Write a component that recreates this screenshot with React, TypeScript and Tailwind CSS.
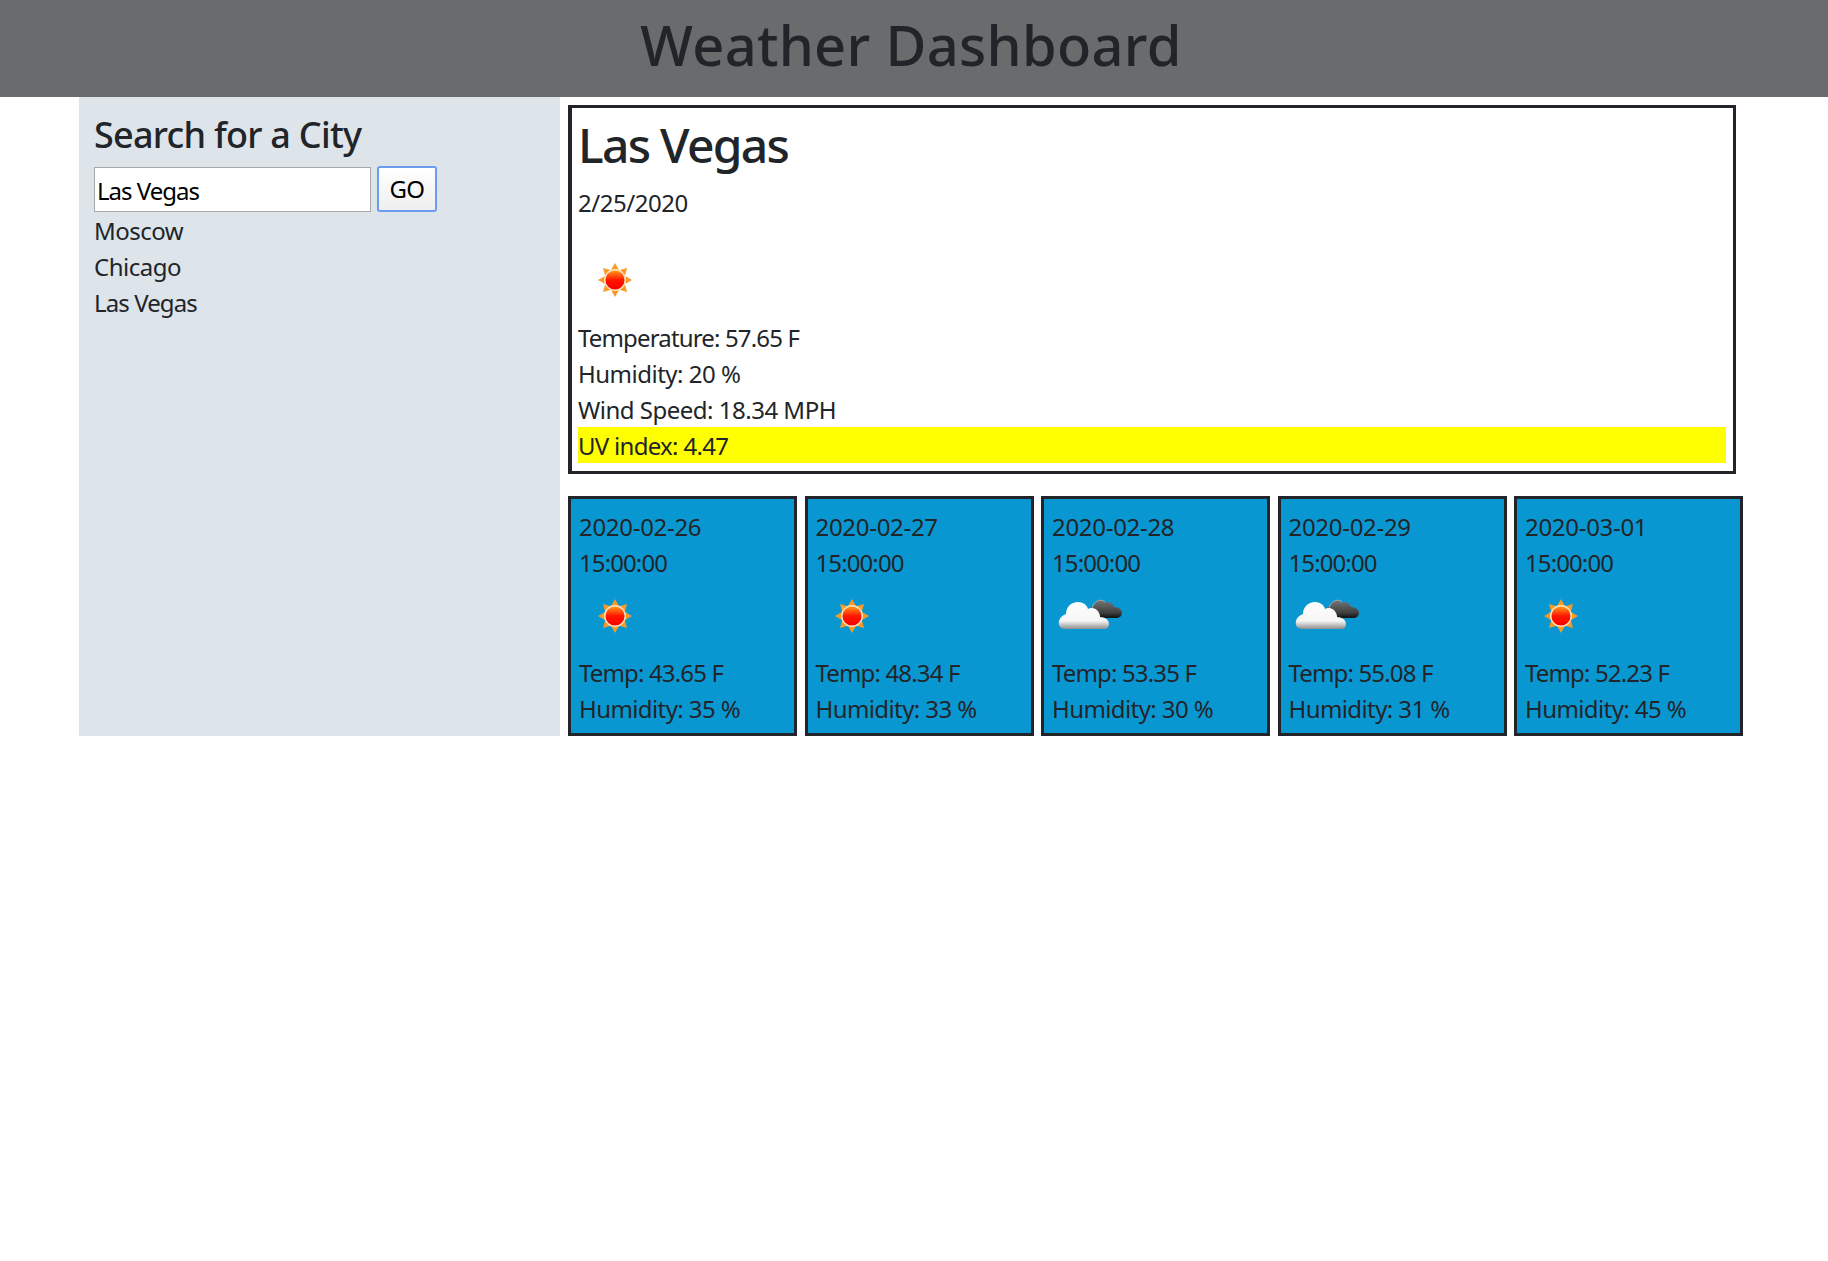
const forecast = [
  { date: "2020-02-26", icon: "sun", temp: "43.65", humidity: "35" },
  { date: "2020-02-27", icon: "sun", temp: "48.34", humidity: "33" },
  { date: "2020-02-28", icon: "cloud", temp: "53.35", humidity: "30" },
  { date: "2020-02-29", icon: "cloud", temp: "55.08", humidity: "31" },
  { date: "2020-03-01", icon: "sun", temp: "52.23", humidity: "45" },
];

const rays = [0, 45, 90, 135, 180, 225, 270, 315];

function SunIcon({ id }: { id: string }) {
  return (
    <svg width="75" height="75" viewBox="0 0 75 75" className="block">
      <defs>
        <linearGradient id={id} x1="0" y1="0" x2="0" y2="1">
          <stop offset="0" stopColor="#ff9a1c" />
          <stop offset="0.5" stopColor="#ff1500" />
          <stop offset="1" stopColor="#fb0000" />
        </linearGradient>
        <filter id={`${id}-soft`}>
          <feGaussianBlur stdDeviation="0.4" />
        </filter>
      </defs>
      <g filter={`url(#${id}-soft)`}>
        {rays.map((r) => (
          <path
            key={r}
            d="M37 18 L41.5 26 L32.5 26 Z"
            fill="#f79a26"
            transform={`rotate(${r} 37 35)`}
          />
        ))}
        <circle cx="37" cy="35" r="11" fill="#ffe9c8" opacity="0.9" />
        <circle cx="37" cy="35" r="9.5" fill={`url(#${id})`} />
      </g>
    </svg>
  );
}

function CloudIcon({ id }: { id: string }) {
  return (
    <svg width="75" height="75" viewBox="0 0 75 75" className="block">
      <defs>
        <linearGradient id={`${id}-w`} x1="0" y1="0" x2="0" y2="1">
          <stop offset="0" stopColor="#ffffff" />
          <stop offset="0.7" stopColor="#f6f6f6" />
          <stop offset="1" stopColor="#8f8f8f" />
        </linearGradient>
        <linearGradient id={`${id}-d`} x1="0" y1="0" x2="0" y2="1">
          <stop offset="0" stopColor="#777777" />
          <stop offset="0.7" stopColor="#3f3f3f" />
          <stop offset="1" stopColor="#111111" />
        </linearGradient>
        <filter id={`${id}-soft`}>
          <feGaussianBlur stdDeviation="0.4" />
        </filter>
      </defs>
      <g filter={`url(#${id}-soft)`}>
        <path
          d="M40 35 C37 31 39 24 43 25 C44 19 51 17 54 22 C58 20 62 22 63 26 C68 26 71 29 71 32 C71 35 68 37 65 37 L45 37 C42 37 41 36 40 35 Z"
          fill={`url(#${id}-d)`}
        />
        <path d="M41 27 C43 20 50 17 54 21" fill="none" stroke="#a8a8a8" strokeWidth="1" />
        <path
          d="M14 48 C9 48 7 44 8 40 C9 36 12 34 15 33 C15 26 20 21 27 21 C32 21 36 24 37 28 C40 26 46 27 48 32 C49 34 49 35 49 36 C54 36 58 39 58 43 C58 46 56 48 53 48 Z"
          fill={`url(#${id}-w)`}
        />
      </g>
    </svg>
  );
}

function WeatherIcon({ icon, id }: { icon: string; id: string }) {
  return icon === "cloud" ? <CloudIcon id={id} /> : <SunIcon id={id} />;
}

export default function App() {
  return (
    <div className="min-h-[1261px] bg-white text-[24px] leading-[36px] tracking-[-0.5px] text-[#212529] font-['Noto_Sans','Open_Sans',sans-serif]">
      <header className="h-[97px] bg-[#6a6b6d] pr-[6px] text-center">
        <h1 className="text-[56px] leading-[88px] font-medium tracking-[0.3px]">Weather Dashboard</h1>
      </header>

      <div className="flex pl-[79px]">
        <aside className="h-[639px] w-[481px] bg-[#dde4ea] px-[15px]">
          <h2 className="pt-[16px] pb-[11px] text-[36px] leading-[43px] font-medium tracking-[-0.75px]">Search for a City</h2>
          <div className="flex items-start gap-[6px]">
            <input
              readOnly
              value="Las Vegas"
              className="h-[45px] w-[277px] border border-[#a9a9a9] bg-white px-[2px] pt-[2px] tracking-[-1px] text-black outline-none"
            />
            <button className="-mt-[1px] h-[46px] w-[60px] rounded-[3px] border-2 border-[#6b9cf0] bg-gradient-to-b from-white to-[#efefef] text-black">
              GO
            </button>
          </div>
          <ul className="mt-[1px]">
            <li>Moscow</li>
            <li>Chicago</li>
            <li className="tracking-[-0.9px]">Las Vegas</li>
          </ul>
        </aside>

        <main className="ml-[8px] w-[1175px]">
          <section className="mt-[8px] w-[1168px] border-[3px] border-l-[4px] border-[#212529] bg-white pt-[8px] pr-[7px] pb-[8px] pl-[6px]">
            <h2 className="mb-[11px] text-[48px] leading-[58px] font-medium tracking-[-1.7px]">Las Vegas</h2>
            <p className="tracking-[-0.45px]">2/25/2020</p>
            <div className="mt-[24px]">
              <SunIcon id="today-sun" />
            </div>
            <p className="tracking-[-0.85px]">Temperature: 57.65 F</p>
            <p>Humidity: 20 %</p>
            <p className="leading-[35px]">Wind Speed: 18.34 MPH</p>
            <p className="h-[36px] bg-[#ffff00] pt-[1px] leading-[36px] tracking-[-0.7px]">UV index: 4.47</p>
          </section>

          <section className="mt-[22px] flex justify-between">
            {forecast.map((day) => (
              <article
                key={day.date}
                className="h-[240px] w-[229px] border-[3px] border-[#212529] bg-[#0997d2] px-[8px] pt-[10px]"
              >
                <p className="tracking-[-0.3px]">{day.date}</p>
                <p className="tracking-[-0.9px]">15:00:00</p>
                <div className="-ml-[1px] h-[74px]">
                  <WeatherIcon icon={day.icon} id={`icon-${day.date}`} />
                </div>
                <p className="tracking-[-0.85px]">Temp: {day.temp} F</p>
                <p className="tracking-[-0.6px]">Humidity: {day.humidity} %</p>
              </article>
            ))}
          </section>
        </main>
      </div>
    </div>
  );
}
